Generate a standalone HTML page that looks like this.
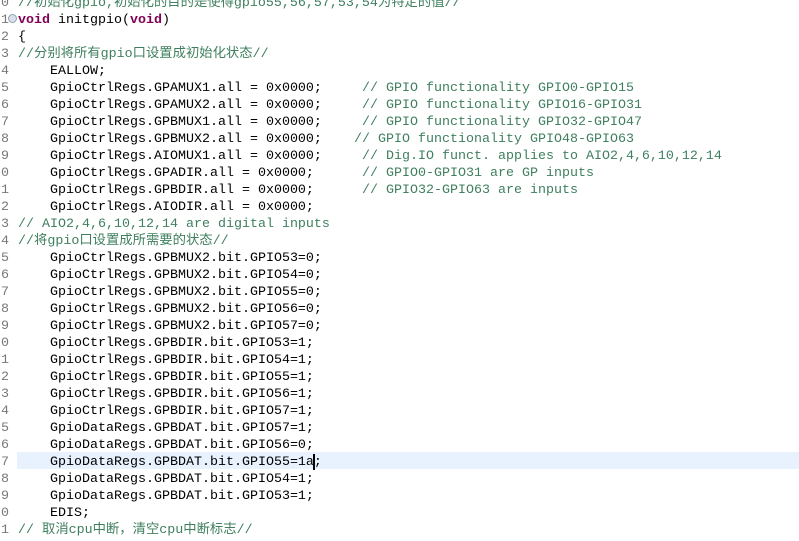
<!DOCTYPE html>
<html><head><meta charset="utf-8"><style>
body{margin:0;width:799px;height:540px;background:#fff;overflow:hidden;position:relative;font-family:"Liberation Mono","Noto Sans CJK SC",monospace;font-size:13.33px;color:#000}
#w{position:absolute;left:0;top:1px;width:799px;height:540px}
.l{position:absolute;left:18px;height:17px;line-height:17px;white-space:pre}
.n{position:absolute;left:0;width:9px;text-align:right;color:#787878;height:17px;line-height:17px;overflow:hidden;direction:rtl}
.c{color:#3F7F5F}
.k{color:#7F0055;font-weight:bold}
.cm{position:absolute;height:17px;line-height:17px;white-space:pre;color:#3F7F5F}
.hl{position:absolute;left:17px;right:0;top:451px;height:17px;background:#E8F2FE}
</style></head><body><div id="w">
<div class="hl"></div>
<div class="n" style="top:-6px">0</div><div class="l c" style="top:-6px">//初始化gpio,初始化的目的是使得gpio55,56,57,53,54为特定的值//</div>
<div class="n" style="top:11px">1</div><div style="position:absolute;left:8px;top:13px;width:9px;height:9px;border-radius:50%;border:1px solid #8aa;background:#dde;box-sizing:border-box"></div><div class="l" style="top:11px"><span class="k">void</span> initgpio(<span class="k">void</span>)</div>
<div class="n" style="top:28px">2</div><div class="l" style="top:28px">{</div>
<div class="n" style="top:45px">3</div><div class="l c" style="top:45px">//分别将所有gpio口设置成初始化状态//</div>
<div class="n" style="top:62px">4</div><div class="l" style="top:62px">    EALLOW;</div>
<div class="n" style="top:79px">5</div><div class="l" style="top:79px">    GpioCtrlRegs.GPAMUX1.all = 0x0000;</div><div class="cm" style="left:362px;top:79px">// GPIO functionality GPIO0-GPIO15</div>
<div class="n" style="top:96px">6</div><div class="l" style="top:96px">    GpioCtrlRegs.GPAMUX2.all = 0x0000;</div><div class="cm" style="left:362px;top:96px">// GPIO functionality GPIO16-GPIO31</div>
<div class="n" style="top:113px">7</div><div class="l" style="top:113px">    GpioCtrlRegs.GPBMUX1.all = 0x0000;</div><div class="cm" style="left:362px;top:113px">// GPIO functionality GPIO32-GPIO47</div>
<div class="n" style="top:130px">8</div><div class="l" style="top:130px">    GpioCtrlRegs.GPBMUX2.all = 0x0000;</div><div class="cm" style="left:354px;top:130px">// GPIO functionality GPIO48-GPIO63</div>
<div class="n" style="top:147px">9</div><div class="l" style="top:147px">    GpioCtrlRegs.AIOMUX1.all = 0x0000;</div><div class="cm" style="left:362px;top:147px">// Dig.IO funct. applies to AIO2,4,6,10,12,14</div>
<div class="n" style="top:164px">0</div><div class="l" style="top:164px">    GpioCtrlRegs.GPADIR.all = 0x0000;</div><div class="cm" style="left:362px;top:164px">// GPIO0-GPIO31 are GP inputs</div>
<div class="n" style="top:181px">1</div><div class="l" style="top:181px">    GpioCtrlRegs.GPBDIR.all = 0x0000;</div><div class="cm" style="left:362px;top:181px">// GPIO32-GPIO63 are inputs</div>
<div class="n" style="top:198px">2</div><div class="l" style="top:198px">    GpioCtrlRegs.AIODIR.all = 0x0000;</div>
<div class="n" style="top:215px">3</div><div class="l c" style="top:215px">// AIO2,4,6,10,12,14 are digital inputs</div>
<div class="n" style="top:232px">4</div><div class="l c" style="top:232px">//将gpio口设置成所需要的状态//</div>
<div class="n" style="top:249px">5</div><div class="l" style="top:249px">    GpioCtrlRegs.GPBMUX2.bit.GPIO53=0;</div>
<div class="n" style="top:266px">6</div><div class="l" style="top:266px">    GpioCtrlRegs.GPBMUX2.bit.GPIO54=0;</div>
<div class="n" style="top:283px">7</div><div class="l" style="top:283px">    GpioCtrlRegs.GPBMUX2.bit.GPIO55=0;</div>
<div class="n" style="top:300px">8</div><div class="l" style="top:300px">    GpioCtrlRegs.GPBMUX2.bit.GPIO56=0;</div>
<div class="n" style="top:317px">9</div><div class="l" style="top:317px">    GpioCtrlRegs.GPBMUX2.bit.GPIO57=0;</div>
<div class="n" style="top:334px">0</div><div class="l" style="top:334px">    GpioCtrlRegs.GPBDIR.bit.GPIO53=1;</div>
<div class="n" style="top:351px">1</div><div class="l" style="top:351px">    GpioCtrlRegs.GPBDIR.bit.GPIO54=1;</div>
<div class="n" style="top:368px">2</div><div class="l" style="top:368px">    GpioCtrlRegs.GPBDIR.bit.GPIO55=1;</div>
<div class="n" style="top:385px">3</div><div class="l" style="top:385px">    GpioCtrlRegs.GPBDIR.bit.GPIO56=1;</div>
<div class="n" style="top:402px">4</div><div class="l" style="top:402px">    GpioCtrlRegs.GPBDIR.bit.GPIO57=1;</div>
<div class="n" style="top:419px">5</div><div class="l" style="top:419px">    GpioDataRegs.GPBDAT.bit.GPIO57=1;</div>
<div class="n" style="top:436px">6</div><div class="l" style="top:436px">    GpioDataRegs.GPBDAT.bit.GPIO56=0;</div>
<div class="n" style="top:453px">7</div><div class="l" style="top:453px">    GpioDataRegs.GPBDAT.bit.GPIO55=1a;</div><div style="position:absolute;left:313px;top:453px;width:2px;height:16px;background:#000"></div>
<div class="n" style="top:470px">8</div><div class="l" style="top:470px">    GpioDataRegs.GPBDAT.bit.GPIO54=1;</div>
<div class="n" style="top:487px">9</div><div class="l" style="top:487px">    GpioDataRegs.GPBDAT.bit.GPIO53=1;</div>
<div class="n" style="top:504px">0</div><div class="l" style="top:504px">    EDIS;</div>
<div class="n" style="top:521px">1</div><div class="l c" style="top:521px">// 取消cpu中断，清空cpu中断标志//</div>
</div></body></html>
